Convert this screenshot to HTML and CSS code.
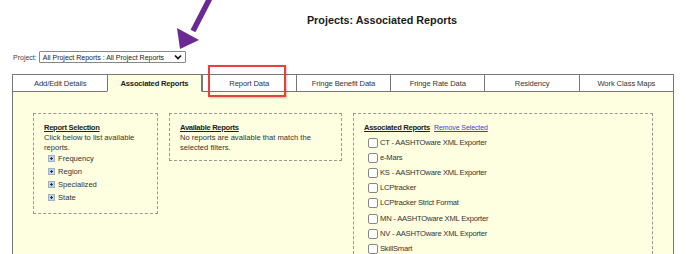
FILE: index.html
```html
<!DOCTYPE html>
<html>
<head>
<meta charset="utf-8">
<link rel="stylesheet" href="styles.css">
</head>
<body>
<div class="page">
  <h1 class="title">Projects: Associated Reports</h1>
  <div class="project-row">
    <span class="project-label">Project:</span>
    <div class="select"><span>All Project Reports : All Project Reports</span>
      <svg class="chev" width="8" height="6" viewBox="0 0 8 6"><path d="M1 1.5 L4 4.5 L7 1.5" fill="none" stroke="#111" stroke-width="1.7"/></svg>
    </div>
  </div>
  <div class="tabs">
    <div class="tab">Add/Edit Details</div>
    <div class="tab active">Associated Reports</div>
    <div class="tab">Report Data</div>
    <div class="tab">Fringe Benefit Data</div>
    <div class="tab">Fringe Rate Data</div>
    <div class="tab">Residency</div>
    <div class="tab">Work Class Maps</div>
  </div>
  <div class="panel">
    <div class="box box-sel">
      <div class="box-title">Report Selection</div>
      <div class="box-text">Click below to list available reports.</div>
      <ul class="tree">
        <li><span class="plus"></span>Frequency</li>
        <li><span class="plus"></span>Region</li>
        <li><span class="plus"></span>Specialized</li>
        <li><span class="plus"></span>State</li>
      </ul>
    </div>
    <div class="box box-avail">
      <div class="box-title">Available Reports</div>
      <div class="box-text">No reports are available that match the selected filters.</div>
    </div>
    <div class="box box-assoc">
      <div class="box-head"><span class="box-title">Associated Reports</span> <span class="link">Remove Selected</span></div>
      <ul class="checks">
        <li><span class="cb"></span>CT - AASHTOware XML Exporter</li>
        <li><span class="cb"></span>e-Mars</li>
        <li><span class="cb"></span>KS - AASHTOware XML Exporter</li>
        <li><span class="cb"></span>LCPtracker</li>
        <li><span class="cb"></span>LCPtracker Strict Format</li>
        <li><span class="cb"></span>MN - AASHTOware XML Exporter</li>
        <li><span class="cb"></span>NV - AASHTOware XML Exporter</li>
        <li><span class="cb"></span>SkillSmart</li>
      </ul>
    </div>
  </div>
  <div class="highlight"></div>
  <svg class="arrow" width="40" height="50" viewBox="0 0 40 50">
    <line x1="31" y1="-2" x2="14" y2="31" stroke="#6b2a93" stroke-width="5.5"/>
    <polygon points="-2,28 1,49 20,40" fill="#6b2a93"/>
  </svg>
</div>
</body>
</html>
```
FILE: styles.css
```css
* { box-sizing: border-box; }
html, body { margin: 0; padding: 0; background: #fff; }
body {
  width: 688px; height: 254px; overflow: hidden;
  font-family: "Liberation Sans", Arial, sans-serif;
  font-size: 7.6px; color: #333;
}
.page { position: relative; width: 688px; height: 254px; overflow: hidden; }
.title {
  margin: 0; padding: 13px 0 0 76px; height: 51px;
  text-align: center; font-size: 10.8px; font-weight: bold; color: #1a1a1a;
  line-height: 14px;
}
.project-row {
  display: flex; align-items: center; height: 12px; margin-left: 13px;
  gap: 2px;
}
.project-label { font-size: 7px; color: #444; }
.select {
  width: 147px; height: 12px; border: 1px solid #888; border-radius: 1px;
  display: flex; align-items: center; justify-content: space-between;
  padding: 0 3px 0 3px; font-size: 7px; color: #222; background: #fff;
}
.tabs {
  margin: 11px 0 0 12px; width: 662px; height: 18px;
  display: grid; grid-template-columns: repeat(7, 1fr);
  border: 1px solid #777; border-bottom: none; background: #fff;
}
.tab {
  display: flex; align-items: center; justify-content: center;
  border-left: 1px solid #777; border-bottom: 1px solid #777;
  color: #333; letter-spacing: -0.1px;
}
.tab:first-child { border-left: none; }
.tab.active { background: #fefee0; font-weight: bold; border-bottom-color: #fefee0; border-right: 1px solid #777; color: #222; letter-spacing: -0.2px; }
.panel {
  margin-left: 12px; width: 662px; height: 162px;
  background: #fefee0; border-left: 1px solid #777; border-right: 1px solid #777;
  display: flex; align-items: flex-start; gap: 11px;
  padding: 21px 20px 0 20px;
}
.box {
  border: 1px dashed #9a9a90; padding: 9px 10px 6px 10px;
  line-height: 10px;
}
.box-sel { width: 125px; height: 101px; }
.box-avail { width: 173px; height: 48px; }
.box-assoc { width: 300px; height: 141px; border-bottom: none; overflow: hidden; }
.box-title { font-weight: bold; text-decoration: underline; color: #222; letter-spacing: -0.3px; }
.tree { list-style: none; margin: -1px 0 0 4px; padding: 0; }
.tree li { display: flex; align-items: center; height: 13px; gap: 3px; }
.plus {
  width: 7px; height: 7px; background: #c4d4e8; border: 1px solid #9fb2c8;
  position: relative;
}
.plus::before { content: ""; position: absolute; left: 1px; top: 2px; width: 3px; height: 1px; background: #333; }
.plus::after { content: ""; position: absolute; left: 2px; top: 1px; width: 1px; height: 3px; background: #333; }
.link { color: #3c3cf0; text-decoration: underline; margin-left: 2px; font-size: 7px; letter-spacing: -0.1px; }
.checks { list-style: none; margin: 2px 0 0 4px; padding: 0; }
.checks li { display: flex; align-items: center; height: 15.2px; gap: 2px; letter-spacing: -0.2px; }
.cb { width: 10px; height: 10px; border: 1px solid #888; border-radius: 2px; background: #fff; }
.highlight {
  position: absolute; left: 208px; top: 65px; width: 78px; height: 32px;
  border: 2px solid #e5413d; box-shadow: 1px 1px 2px rgba(0,0,0,0.25);
}
.arrow { position: absolute; left: 179px; top: 0; overflow: visible; }
```
